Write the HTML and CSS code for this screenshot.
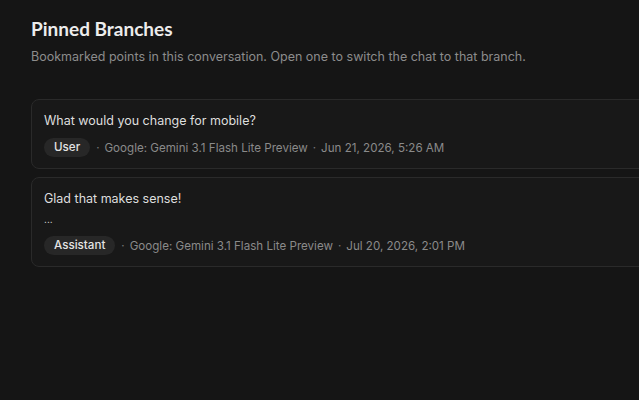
FILE: index.html
```html
<!DOCTYPE html>
<html lang="en">
<head>
<meta charset="utf-8">
<title>Pinned Branches</title>
<link rel="stylesheet" href="styles.css">
</head>
<body>
<main class="page">
  <header class="head">
    <h1 class="title">Pinned Branches</h1>
    <p class="subtitle">Bookmarked points in this conversation. Open one to switch the chat to that branch.</p>
  </header>
  <section class="list">
    <article class="card">
      <p class="msg">What would you change for mobile?</p>
      <div class="meta">
        <span class="pill">User</span>
        <span class="sep">·</span>
        <span>Google: Gemini 3.1 Flash Lite Preview</span>
        <span class="sep">·</span>
        <span>Jun 21, 2026, 5:26 AM</span>
      </div>
    </article>
    <article class="card">
      <p class="msg">Glad that makes sense!<br><span class="more">...</span></p>
      <div class="meta">
        <span class="pill">Assistant</span>
        <span class="sep">·</span>
        <span>Google: Gemini 3.1 Flash Lite Preview</span>
        <span class="sep">·</span>
        <span>Jul 20, 2026, 2:01 PM</span>
      </div>
    </article>
  </section>
</main>
</body>
</html>
```
FILE: styles.css
```css
html, body {
  margin: 0;
  padding: 0;
  background: #151515;
  overflow: hidden;
}
body {
  font-family: Inter, "Noto Sans", sans-serif;
  color: #dcdcdc;
}
.page {
  padding: 17px 0 0 31px;
}
.head {
  display: flex;
  flex-direction: column;
  gap: 7px;
}
.title {
  margin: 0;
  font-family: Lato, "Noto Sans", sans-serif;
  font-weight: 700;
  font-size: 19px;
  line-height: 24px;
  color: #ececec;
}
.subtitle {
  margin: 0;
  font-size: 12.5px;
  line-height: 18px;
  color: #8c8c8c;
}
.list {
  margin-top: 33px;
  display: flex;
  flex-direction: column;
  gap: 8px;
}
.card {
  width: 700px;
  box-sizing: border-box;
  border: 1px solid #2a2a2a;
  border-radius: 8px;
  background: #181818;
  padding: 11px 12px 11px 12px;
  display: flex;
  flex-direction: column;
  gap: 7px;
}
.msg {
  margin: 0;
  font-size: 12.5px;
  line-height: 20px;
  color: #dedede;
}
.more {
  font-size: 10px;
}
.meta {
  display: flex;
  align-items: center;
  gap: 5px;
  font-size: 11.6px;
  color: #8a8a8a;
}
.pill {
  background: #272727;
  color: #e4e4e4;
  font-weight: 500;
  border-radius: 10px;
  padding: 0 10px;
  height: 19px;
  line-height: 19px;
  margin-right: 1px;
}
.sep {
  color: #777;
}
```
